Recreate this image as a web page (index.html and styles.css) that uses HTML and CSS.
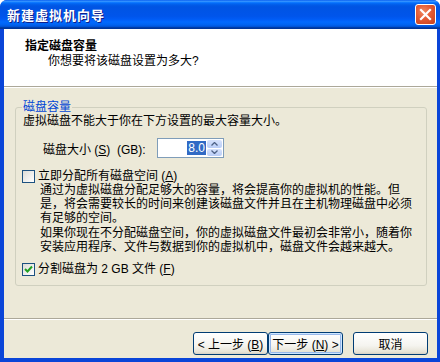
FILE: index.html
```html
<!DOCTYPE html>
<html>
<head>
  <title>新建虚拟机向导</title>
  <link rel="stylesheet" href="styles.css">
</head>
<body>
  <div class="window">
    <div class="titlebar">
      <span class="title">新建虚拟机向导</span>
      <div class="close-btn">
        <svg width="13" height="13" viewBox="0 0 13 13">
          <path d="M2 2 L11 11 M11 2 L2 11" stroke="#fff" stroke-width="2.2" stroke-linecap="square"/>
        </svg>
      </div>
    </div>

    <div class="client">
      <div class="header">
        <div class="header-title">指定磁盘容量</div>
        <div class="header-sub">你想要将该磁盘设置为多大?</div>
      </div>

      <div class="content">
        <fieldset class="group">
          <legend>磁盘容量</legend>
          <p class="intro">虚拟磁盘不能大于你在下方设置的最大容量大小。</p>

          <div class="size-row">
            <span class="size-label">磁盘大小 (<u>S</u>)&nbsp; (GB):</span>
            <div class="spin">
              <div class="spin-value"><span class="selected">8.0</span></div>
              <div class="spin-arrows">
                <div class="arrow">
                  <svg width="7" height="4" viewBox="0 0 7 4"><path d="M0.5 3.5 L3.5 0.5 L6.5 3.5" fill="none" stroke="#4d6185" stroke-width="1.3"/></svg>
                </div>
                <div class="arrow">
                  <svg width="7" height="4" viewBox="0 0 7 4"><path d="M0.5 0.5 L3.5 3.5 L6.5 0.5" fill="none" stroke="#4d6185" stroke-width="1.3"/></svg>
                </div>
              </div>
            </div>
          </div>

          <div class="check-row">
            <span class="checkbox"></span>
            <span>立即分配所有磁盘空间 (<u>A</u>)</span>
          </div>
          <div class="desc">
            <p>通过为虚拟磁盘分配足够大的容量，将会提高你的虚拟机的性能。但<br>是，将会需要较长的时间来创建该磁盘文件并且在主机物理磁盘中必须<br>有足够的空间。</p>
            <p>如果你现在不分配磁盘空间，你的虚拟磁盘文件最初会非常小，随着你<br>安装应用程序、文件与数据到你的虚拟机中，磁盘文件会越来越大。</p>
          </div>

          <div class="check-row last">
            <span class="checkbox">
              <svg width="9" height="9" viewBox="0 0 9 9"><path d="M1 4 L3.5 6.5 L8 1.5" fill="none" stroke="#21a121" stroke-width="2"/></svg>
            </span>
            <span>分割磁盘为 2 GB 文件 (<u>F</u>)</span>
          </div>
        </fieldset>
      </div>

      <div class="footer">
        <button class="btn">&lt; 上一步 (<u>B</u>)</button>
        <button class="btn btn-default">下一步 (<u>N</u>) &gt;</button>
        <button class="btn btn-cancel">取消</button>
      </div>
    </div>
  </div>
</body>
</html>
```

FILE: styles.css
```css
body {
  margin: 0;
  background: #fff;
  font-family: "Liberation Sans", "Noto Sans CJK SC", sans-serif;
  font-size: 12px;
  color: #000;
}

.window {
  width: 440px;
  height: 362px;
  display: flex;
  flex-direction: column;
  background: #0a45d8;
  border-radius: 7px 7px 0 0;
  overflow: hidden;
}

/* Title bar */

.titlebar {
  height: 29px;
  flex: none;
  display: flex;
  align-items: center;
  justify-content: space-between;
  padding: 0 4px 0 7px;
  background: linear-gradient(to bottom, #0058ee 0%, #3a93ff 4%, #288eff 6%, #127dff 8%, #036ffc 10%, #0262ee 14%, #0057e5 20%, #0054e3 24%, #0055eb 56%, #005bf5 66%, #026afe 76%, #0062ef 86%, #0052d6 92%, #0040ab 94%, #003092 100%);
}

.title {
  color: #fff;
  font-size: 13px;
  font-weight: bold;
  letter-spacing: 1px;
  text-shadow: 1px 1px 0 #0f1f8a;
}

.close-btn {
  width: 19px;
  height: 19px;
  border: 1px solid #fff;
  border-radius: 3px;
  background: radial-gradient(circle at 40% 35%, #f08a63 0%, #e35a34 45%, #c4401b 100%);
  display: flex;
  align-items: center;
  justify-content: center;
}

/* Client area */

.client {
  flex: 1;
  display: flex;
  flex-direction: column;
  margin: 0 3px 4px 4px;
  background: #ece9d8;
}

.header {
  height: 58px;
  flex: none;
  background: #fff;
  border-bottom: 1px solid #aca899;
  box-shadow: 0 1px 0 #fff;
  box-sizing: border-box;
  padding-top: 10px;
}

.header-title {
  margin-left: 21px;
  font-weight: bold;
  line-height: 15px;
}

.header-sub {
  margin-left: 44px;
  line-height: 15px;
}

.content {
  flex: 1;
  padding-top: 1px;
}

.group {
  margin: 12px 10px 0 11px;
  padding: 0 7px 9px 7px;
  border: 1px solid #d0d0bf;
  border-radius: 3px;
}

.group legend {
  color: #0046d5;
  line-height: 14px;
  padding: 0 1px;
  margin-left: -1px;
}

.intro {
  margin: 0;
  line-height: 14px;
}

.size-row {
  display: flex;
  align-items: center;
  margin-top: 10px;
  padding-left: 20px;
}

.size-label {
  width: 114px;
}

.spin {
  display: flex;
  width: 67px;
  height: 20px;
  box-sizing: border-box;
  border: 1px solid #7f9db9;
  background: #fff;
}

.spin-value {
  flex: 1;
  display: flex;
  align-items: center;
  justify-content: flex-end;
  padding-right: 1px;
}

.selected {
  background: #316ac5;
  color: #fff;
  line-height: 14px;
  padding: 0 1px;
}

.spin-arrows {
  width: 15px;
  display: flex;
  flex-direction: column;
  gap: 1px;
  padding: 1px 1px 1px 0;
}

.arrow {
  flex: 1;
  display: flex;
  align-items: center;
  justify-content: center;
  background: linear-gradient(to bottom, #d6e2fc, #b9cdf7);
  border-radius: 2px;
}

.check-row {
  display: flex;
  align-items: center;
  gap: 3px;
  margin-top: 11px;
  margin-left: -1px;
  line-height: 14px;
}

.checkbox {
  width: 13px;
  height: 13px;
  box-sizing: border-box;
  border: 1px solid #1c5180;
  background: linear-gradient(135deg, #dcdcd7, #fff);
  display: flex;
  align-items: center;
  justify-content: center;
}

.desc {
  margin-left: 17px;
}

.desc p {
  margin: 0 0 1px 0;
  line-height: 14px;
}

.check-row.last {
  margin-top: 8px;
}

/* Footer buttons */

.footer {
  flex: none;
  display: flex;
  justify-content: flex-end;
  padding: 13px 9px 3px 0;
  border-top: 1px solid #aca899;
  box-shadow: inset 0 1px 0 #fff;
}

.btn {
  width: 75px;
  height: 23px;
  padding: 0;
  font-family: inherit;
  font-size: 12px;
  color: #000;
  border: 1px solid #003c74;
  border-radius: 3px;
  background: linear-gradient(to bottom, #fff 0%, #f5f4ef 60%, #e6e3d6 90%, #d6d0c5 100%);
}

.btn-default {
  box-shadow: inset 0 0 0 1px #cee7ff, inset 0 0 0 2px #98b8ea;
}

.btn-cancel {
  margin-left: 10px;
}
```
